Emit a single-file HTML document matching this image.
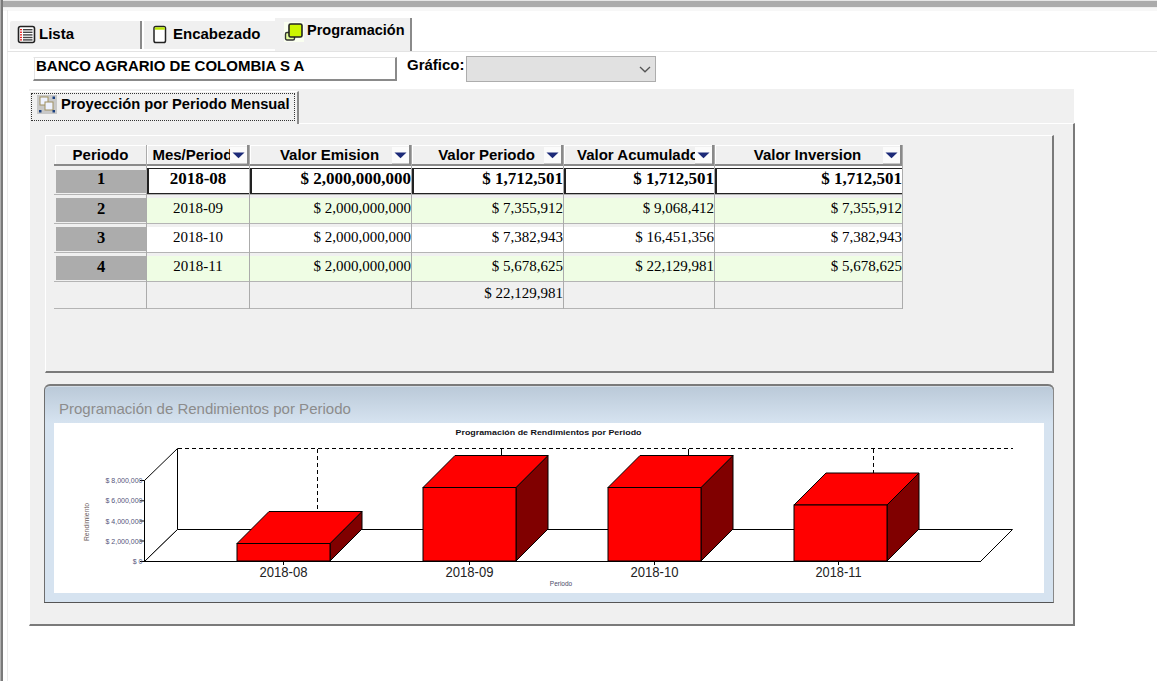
<!DOCTYPE html>
<html><head><meta charset="utf-8">
<style>
*{box-sizing:border-box;margin:0;padding:0}
html,body{width:1157px;height:681px;overflow:hidden;background:#fff;position:relative;font-family:"Liberation Sans",sans-serif;color:#000}
.a{position:absolute}
.b{font-weight:bold}
.tab{position:absolute;background:#f0f0f0;font-weight:bold;font-size:15px;white-space:nowrap}
.lbl{position:absolute;white-space:nowrap;line-height:1}
.hdr{position:absolute;top:146px;height:18px;background:#f0f0f0;border-top:1px solid #fff;border-left:1px solid #fff;font-weight:bold;font-size:14px;line-height:17px;text-align:center;white-space:nowrap;overflow:hidden}
.btn{position:absolute;top:1px;right:0;width:18px;height:16px;background:#f0f0f0;border-left:1px solid #fff}
.btn i{position:absolute;left:3px;top:5px;width:0;height:0;border-left:6px solid transparent;border-right:6px solid transparent;border-top:5px solid #1a2a7a}
.cell{position:absolute;font-family:"Liberation Serif",serif;font-size:15px;line-height:24px;white-space:nowrap;overflow:hidden}
.rh{position:absolute;left:56px;width:90px;background:#acacac;font-family:"Liberation Serif",serif;font-weight:bold;font-size:15px;text-align:center}
.hl{position:absolute;height:17px;line-height:17px;font-weight:bold;font-size:15px;text-align:center;white-space:nowrap;overflow:hidden}
.tc{position:absolute;height:25px;line-height:25px;font-family:"Liberation Serif",serif;white-space:nowrap;overflow:hidden}
</style></head><body>
<!-- outer window chrome -->
<div class="a" style="left:0;top:0;width:1157px;height:1px;background:#e6e6e6"></div>
<div class="a" style="left:0;top:1px;width:1157px;height:6px;background:#ababab"></div>
<div class="a" style="left:0;top:7px;width:1157px;height:1px;background:#eeeeee"></div>
<div class="a" style="left:0;top:8px;width:1157px;height:3px;background:#f7f7f7"></div>
<div class="a" style="left:0;top:0;width:1px;height:681px;background:#b0b0b0"></div>
<div class="a" style="left:1px;top:0;width:2px;height:681px;background:#7a7a7a"></div>
<div class="a" style="left:7px;top:10px;width:1px;height:671px;background:#ececec"></div>

<!-- tabs -->
<div class="a" style="left:7px;top:51px;width:1150px;height:1px;background:#e3e3e3"></div>
<div class="tab" style="left:10px;top:21px;width:132px;height:28px;border-right:2px solid #8a8a8a;border-top-left-radius:2px"></div>
<div class="tab" style="left:144px;top:21px;width:131px;height:28px"></div>
<div class="tab" style="left:275px;top:18px;width:137px;height:33px;border-right:2px solid #8a8a8a"></div>


<!-- tab labels -->
<svg class="a" style="left:17px;top:25px" width="19" height="19" viewBox="0 0 19 19">
 <rect x="1.5" y="1.5" width="16" height="16" rx="2" fill="#fff" stroke="#222" stroke-width="1.6"/>
 <g fill="#e82020"><rect x="3" y="4" width="2" height="1.3"/><rect x="3" y="6.6" width="2" height="1.3"/><rect x="3" y="9.2" width="2" height="1.3"/><rect x="3" y="11.8" width="2" height="1.3"/><rect x="3" y="14.2" width="2" height="1.3"/></g>
 <g fill="#444"><rect x="6" y="4" width="9.5" height="1.4"/><rect x="6" y="6.6" width="9.5" height="1.4"/><rect x="6" y="9.2" width="9.5" height="1.4"/><rect x="6" y="11.8" width="9.5" height="1.4"/><rect x="6" y="14.2" width="9.5" height="1.4"/></g>
</svg>
<div class="lbl b" style="left:39px;top:26px;font-size:15px">Lista</div>
<svg class="a" style="left:152px;top:25px" width="16" height="19" viewBox="0 0 16 19">
 <rect x="2" y="1.5" width="11.5" height="16" rx="1.8" fill="#fff" stroke="#222" stroke-width="1.5"/>
 <rect x="2.8" y="2.3" width="10" height="2.4" fill="#b8e600"/>
</svg>
<div class="lbl b" style="left:173px;top:26px;font-size:15px">Encabezado</div>
<div class="a" style="left:284px;top:22px;width:20px;height:20px;background:#fafff0"></div>
<svg class="a" style="left:284px;top:22px" width="20" height="20" viewBox="0 0 20 20">
 <rect x="1.5" y="10.5" width="9" height="7.5" rx="1.5" fill="#e4ff9c" stroke="#333" stroke-width="1.4"/>
 <rect x="5" y="2" width="13" height="13" rx="1.6" fill="#ccf500" stroke="#222" stroke-width="1.6"/>
</svg>
<div class="lbl b" style="left:307px;top:23px;font-size:14.5px">Programación</div>

<!-- textbox -->
<div class="a" style="left:33px;top:57px;width:364px;height:24px;background:#fff;border-top:1px solid #e3e3e3;border-left:1px solid #fff;box-shadow:inset 1px 0 0 #e3e3e3;border-right:2px solid #8a8a8a;border-bottom:2px solid #8a8a8a"></div>
<div class="lbl b" style="left:36px;top:58px;font-size:15px">BANCO AGRARIO DE COLOMBIA S A</div>
<div class="lbl b" style="left:407px;top:57px;font-size:15px">Gráfico:</div>
<div class="a" style="left:466px;top:56px;width:190px;height:26px;background:#e1e1e1;border:1px solid #adadad"></div>
<svg class="a" style="left:639px;top:66px" width="12" height="7" viewBox="0 0 12 7"><path d="M1 1 L6 5.8 L11 1" fill="none" stroke="#555" stroke-width="1.3"/></svg>

<!-- page frame -->
<div class="a" style="left:29px;top:89px;width:1045px;height:35px;background:#f0f0f0"></div>
<div class="a" style="left:29px;top:123px;width:1046px;height:503px;background:#f0f0f0;border-top:1px solid #fff;border-left:1px solid #fff;border-right:2px solid #7a7a7a;border-bottom:2px solid #7a7a7a"></div>
<div class="a" style="left:29px;top:91px;width:270px;height:33px;background:#f0f0f0;border-left:1px solid #fff;border-top:1px solid #fff;border-right:2px solid #8a8a8a"></div>
<div class="a" style="left:31px;top:93px;width:264px;height:28px;border:1px dotted #333"></div>
<svg class="a" style="left:37px;top:95px" width="20" height="19" viewBox="0 0 20 19">
 <rect x="0" y="0" width="20" height="19" fill="#c8c8c8"/>
 <rect x="3" y="2" width="8" height="8" fill="#eef2ff" stroke="#a09060" stroke-width="1"/>
 <rect x="8" y="7" width="8" height="8" fill="#eef2ff" stroke="#a09060" stroke-width="1"/>
 <rect x="15.5" y="1.5" width="2.5" height="2.5" fill="#1a4080"/>
 <rect x="2" y="15" width="2.5" height="2.5" fill="#1a4080"/>
 <rect x="15.5" y="15" width="2.5" height="2.5" fill="#1a4080"/>
</svg>
<div class="lbl b" style="left:61px;top:97px;font-size:14.7px">Proyección por Periodo Mensual</div>

<!-- inner frame -->
<div class="a" style="left:45px;top:135px;width:1009px;height:238px;border-top:1px solid #fff;border-left:1px solid #fff;border-right:2px solid #7a7a7a;border-bottom:2px solid #7a7a7a"></div>

<!-- grid -->
<div class="a" style="left:55px;top:145px;width:848px;height:19px;background:#f0f0f0"></div>
<div class="a" style="left:54px;top:164px;width:849px;height:2px;background:#8a8a8a"></div>
<div class="a" style="left:55px;top:145px;width:91px;height:1px;background:#fff"></div>
<div class="a" style="left:55px;top:145px;width:1px;height:19px;background:#fff"></div>
<div class="hl" style="left:55px;top:146px;width:91px">Periodo</div>
<div class="a" style="left:147px;top:145px;width:100px;height:1px;background:#fff"></div>
<div class="a" style="left:147px;top:145px;width:1px;height:19px;background:#fff"></div>
<div class="a" style="left:247px;top:145px;width:2px;height:19px;background:#8a8a8a"></div>
<div class="hl" style="left:147px;top:146px;width:100px">Mes/Periodo</div>
<div class="a" style="left:230px;top:147px;width:17px;height:17px;background:#fbfbfb;border-bottom:1px solid #c8c8c8"></div>
<svg class="a" style="left:232px;top:152px" width="13" height="7" viewBox="0 0 13 7"><path d="M0.5 0.5 H12.5 L6.5 6.2 Z" fill="#1c2a78"/></svg>
<div class="a" style="left:250px;top:145px;width:159px;height:1px;background:#fff"></div>
<div class="a" style="left:250px;top:145px;width:1px;height:19px;background:#fff"></div>
<div class="a" style="left:409px;top:145px;width:2px;height:19px;background:#8a8a8a"></div>
<div class="hl" style="left:250px;top:146px;width:159px">Valor Emision</div>
<div class="a" style="left:392px;top:147px;width:17px;height:17px;background:#fbfbfb;border-bottom:1px solid #c8c8c8"></div>
<svg class="a" style="left:394px;top:152px" width="13" height="7" viewBox="0 0 13 7"><path d="M0.5 0.5 H12.5 L6.5 6.2 Z" fill="#1c2a78"/></svg>
<div class="a" style="left:412px;top:145px;width:149px;height:1px;background:#fff"></div>
<div class="a" style="left:412px;top:145px;width:1px;height:19px;background:#fff"></div>
<div class="a" style="left:561px;top:145px;width:2px;height:19px;background:#8a8a8a"></div>
<div class="hl" style="left:412px;top:146px;width:149px">Valor Periodo</div>
<div class="a" style="left:544px;top:147px;width:17px;height:17px;background:#fbfbfb;border-bottom:1px solid #c8c8c8"></div>
<svg class="a" style="left:546px;top:152px" width="13" height="7" viewBox="0 0 13 7"><path d="M0.5 0.5 H12.5 L6.5 6.2 Z" fill="#1c2a78"/></svg>
<div class="a" style="left:564px;top:145px;width:148px;height:1px;background:#fff"></div>
<div class="a" style="left:564px;top:145px;width:1px;height:19px;background:#fff"></div>
<div class="a" style="left:712px;top:145px;width:2px;height:19px;background:#8a8a8a"></div>
<div class="hl" style="left:564px;top:146px;width:148px">Valor Acumulado</div>
<div class="a" style="left:695px;top:147px;width:17px;height:17px;background:#fbfbfb;border-bottom:1px solid #c8c8c8"></div>
<svg class="a" style="left:697px;top:152px" width="13" height="7" viewBox="0 0 13 7"><path d="M0.5 0.5 H12.5 L6.5 6.2 Z" fill="#1c2a78"/></svg>
<div class="a" style="left:715px;top:145px;width:185px;height:1px;background:#fff"></div>
<div class="a" style="left:715px;top:145px;width:1px;height:19px;background:#fff"></div>
<div class="a" style="left:900px;top:145px;width:2px;height:19px;background:#8a8a8a"></div>
<div class="hl" style="left:715px;top:146px;width:185px">Valor Inversion</div>
<div class="a" style="left:883px;top:147px;width:17px;height:17px;background:#fbfbfb;border-bottom:1px solid #c8c8c8"></div>
<svg class="a" style="left:885px;top:152px" width="13" height="7" viewBox="0 0 13 7"><path d="M0.5 0.5 H12.5 L6.5 6.2 Z" fill="#1c2a78"/></svg>
<div class="a" style="left:146px;top:145px;width:1px;height:164px;background:#ababab"></div>
<div class="a" style="left:249px;top:145px;width:1px;height:164px;background:#ababab"></div>
<div class="a" style="left:411px;top:145px;width:1px;height:164px;background:#ababab"></div>
<div class="a" style="left:563px;top:145px;width:1px;height:164px;background:#ababab"></div>
<div class="a" style="left:714px;top:145px;width:1px;height:164px;background:#ababab"></div>
<div class="a" style="left:902px;top:145px;width:1px;height:164px;background:#ababab"></div>
<div class="a" style="left:147px;top:166px;width:755px;height:28px;background:#fff"></div>
<div class="a" style="left:55px;top:166px;width:91px;height:28px;background:#f0f0f0"></div>
<div class="a" style="left:56px;top:170px;width:90px;height:23px;background:#acacac"></div>
<div class="a" style="left:147px;top:168px;width:755px;height:1px;background:#222"></div>
<div class="a" style="left:147px;top:193px;width:755px;height:1px;background:#222"></div>
<div class="a" style="left:147px;top:168px;width:2px;height:26px;background:#222"></div>
<div class="a" style="left:250px;top:168px;width:2px;height:26px;background:#222"></div>
<div class="a" style="left:412px;top:168px;width:2px;height:26px;background:#222"></div>
<div class="a" style="left:564px;top:168px;width:2px;height:26px;background:#222"></div>
<div class="a" style="left:715px;top:168px;width:2px;height:26px;background:#222"></div>
<div class="a" style="left:54px;top:194px;width:849px;height:1px;background:#b4b4b4"></div>
<div class="a" style="left:55px;top:195px;width:848px;height:3px;background:#f0f0f0"></div>
<div class="a" style="left:56px;top:198px;width:90px;height:24px;background:#acacac"></div>
<div class="a" style="left:147px;top:198px;width:755px;height:25px;background:#effde4"></div>
<div class="a" style="left:54px;top:223px;width:849px;height:1px;background:#b4b4b4"></div>
<div class="a" style="left:55px;top:224px;width:848px;height:3px;background:#f0f0f0"></div>
<div class="a" style="left:56px;top:227px;width:90px;height:24px;background:#acacac"></div>
<div class="a" style="left:147px;top:227px;width:755px;height:25px;background:#ffffff"></div>
<div class="a" style="left:54px;top:252px;width:849px;height:1px;background:#b4b4b4"></div>
<div class="a" style="left:55px;top:253px;width:848px;height:3px;background:#f0f0f0"></div>
<div class="a" style="left:56px;top:256px;width:90px;height:24px;background:#acacac"></div>
<div class="a" style="left:147px;top:256px;width:755px;height:25px;background:#effde4"></div>
<div class="a" style="left:54px;top:281px;width:849px;height:1px;background:#b4b4b4"></div>
<div class="a" style="left:55px;top:282px;width:848px;height:26px;background:#f0f0f0"></div>
<div class="a" style="left:54px;top:308px;width:849px;height:1px;background:#b4b4b4"></div>
<div class="a" style="left:146px;top:166px;width:1px;height:143px;background:#ababab"></div>
<div class="a" style="left:249px;top:166px;width:1px;height:143px;background:#ababab"></div>
<div class="a" style="left:411px;top:166px;width:1px;height:143px;background:#ababab"></div>
<div class="a" style="left:563px;top:166px;width:1px;height:143px;background:#ababab"></div>
<div class="a" style="left:714px;top:166px;width:1px;height:143px;background:#ababab"></div>
<div class="a" style="left:902px;top:166px;width:1px;height:143px;background:#ababab"></div>
<div class="a" style="left:147px;top:168px;width:2px;height:26px;background:#222"></div>
<div class="a" style="left:250px;top:168px;width:2px;height:26px;background:#222"></div>
<div class="a" style="left:412px;top:168px;width:2px;height:26px;background:#222"></div>
<div class="a" style="left:564px;top:168px;width:2px;height:26px;background:#222"></div>
<div class="a" style="left:715px;top:168px;width:2px;height:26px;background:#222"></div>
<div class="tc" style="left:56px;top:166px;width:90px;text-align:center;font-weight:bold;font-size:16.5px">1</div>
<div class="tc" style="left:147px;top:166px;width:102px;text-align:center;font-weight:bold;font-size:17px">2018-08</div>
<div class="tc" style="left:250px;top:166px;width:161px;text-align:right;font-weight:bold;font-size:17px">$ 2,000,000,000</div>
<div class="tc" style="left:412px;top:166px;width:151px;text-align:right;font-weight:bold;font-size:17px">$ 1,712,501</div>
<div class="tc" style="left:564px;top:166px;width:150px;text-align:right;font-weight:bold;font-size:17px">$ 1,712,501</div>
<div class="tc" style="left:715px;top:166px;width:187px;text-align:right;font-weight:bold;font-size:17px">$ 1,712,501</div>
<div class="tc" style="left:56px;top:196px;width:90px;text-align:center;font-weight:bold;font-size:16.5px">2</div>
<div class="tc" style="left:147px;top:196px;width:102px;text-align:center;font-size:15px">2018-09</div>
<div class="tc" style="left:250px;top:196px;width:161px;text-align:right;font-size:15px">$ 2,000,000,000</div>
<div class="tc" style="left:412px;top:196px;width:151px;text-align:right;font-size:15px">$ 7,355,912</div>
<div class="tc" style="left:564px;top:196px;width:150px;text-align:right;font-size:15px">$ 9,068,412</div>
<div class="tc" style="left:715px;top:196px;width:187px;text-align:right;font-size:15px">$ 7,355,912</div>
<div class="tc" style="left:56px;top:225px;width:90px;text-align:center;font-weight:bold;font-size:16.5px">3</div>
<div class="tc" style="left:147px;top:225px;width:102px;text-align:center;font-size:15px">2018-10</div>
<div class="tc" style="left:250px;top:225px;width:161px;text-align:right;font-size:15px">$ 2,000,000,000</div>
<div class="tc" style="left:412px;top:225px;width:151px;text-align:right;font-size:15px">$ 7,382,943</div>
<div class="tc" style="left:564px;top:225px;width:150px;text-align:right;font-size:15px">$ 16,451,356</div>
<div class="tc" style="left:715px;top:225px;width:187px;text-align:right;font-size:15px">$ 7,382,943</div>
<div class="tc" style="left:56px;top:254px;width:90px;text-align:center;font-weight:bold;font-size:16.5px">4</div>
<div class="tc" style="left:147px;top:254px;width:102px;text-align:center;font-size:15px">2018-11</div>
<div class="tc" style="left:250px;top:254px;width:161px;text-align:right;font-size:15px">$ 2,000,000,000</div>
<div class="tc" style="left:412px;top:254px;width:151px;text-align:right;font-size:15px">$ 5,678,625</div>
<div class="tc" style="left:564px;top:254px;width:150px;text-align:right;font-size:15px">$ 22,129,981</div>
<div class="tc" style="left:715px;top:254px;width:187px;text-align:right;font-size:15px">$ 5,678,625</div>
<div class="tc" style="left:412px;top:281px;width:151px;text-align:right;font-size:15px">$ 22,129,981</div>
<!-- chart -->
<div class="a" style="left:44px;top:384px;width:1010px;height:219px;border:1px solid #6e6e6e;border-top:2px solid #7a7a7a;border-top-left-radius:6px;border-top-right-radius:6px;box-shadow:inset 0 1px 0 #d4dde6;background:linear-gradient(to bottom,#bac9d8 0px,#d6e3f0 37px,#d6e3f0 100%)"></div>
<div class="a" style="left:44px;top:384px;width:1010px;height:219px;border-right:1px solid #888;border-bottom:1px solid #555;border-top-left-radius:6px;border-top-right-radius:6px;pointer-events:none"></div>
<div class="lbl" style="left:59px;top:401px;font-size:15px;color:#8c8c8c">Programación de Rendimientos por Periodo</div>
<div class="a" style="left:54px;top:423px;width:990px;height:170px;background:#fff"></div>
<svg class="a" style="left:54px;top:423px" width="990" height="170" viewBox="54 423 990 170">
<g shape-rendering="crispEdges" stroke="#000" stroke-width="1" fill="none">
<polygon points="144.5,480.5 177.5,448.5 177.5,529.5 144.5,561.5" fill="#fff" shape-rendering="auto"/>
<polygon points="144.5,561.5 177.5,529.5 1012.5,529.5 980.5,561.5" fill="#fff" shape-rendering="auto"/>
<line x1="177.5" y1="448.5" x2="1013" y2="448.5" stroke-dasharray="4,3"/>
<line x1="317.5" y1="449" x2="317.5" y2="511" stroke-dasharray="4,3"/>
<line x1="873.5" y1="449" x2="873.5" y2="473" stroke-dasharray="4,3"/>
<line x1="501.5" y1="449" x2="501.5" y2="455"/>
<line x1="688.5" y1="449" x2="688.5" y2="455"/>
</g>
<polygon points="330,543.5 362,511.5 362,529 330,561" fill="#800000" stroke="#000" stroke-width="1" stroke-linejoin="round"/>
<polygon points="237,543.5 269,511.5 362,511.5 330,543.5" fill="#ff0000" stroke="#000" stroke-width="1" stroke-linejoin="round"/>
<rect x="237" y="543.5" width="93" height="17.5" fill="#ff0000" stroke="#000" stroke-width="1"/>
<polygon points="516,487.5 548,455.5 548,529 516,561" fill="#800000" stroke="#000" stroke-width="1" stroke-linejoin="round"/>
<polygon points="423,487.5 455,455.5 548,455.5 516,487.5" fill="#ff0000" stroke="#000" stroke-width="1" stroke-linejoin="round"/>
<rect x="423" y="487.5" width="93" height="73.5" fill="#ff0000" stroke="#000" stroke-width="1"/>
<polygon points="701,487.5 733,455.5 733,529 701,561" fill="#800000" stroke="#000" stroke-width="1" stroke-linejoin="round"/>
<polygon points="608,487.5 640,455.5 733,455.5 701,487.5" fill="#ff0000" stroke="#000" stroke-width="1" stroke-linejoin="round"/>
<rect x="608" y="487.5" width="93" height="73.5" fill="#ff0000" stroke="#000" stroke-width="1"/>
<polygon points="887,505 919,473 919,529 887,561" fill="#800000" stroke="#000" stroke-width="1" stroke-linejoin="round"/>
<polygon points="794,505 826,473 919,473 887,505" fill="#ff0000" stroke="#000" stroke-width="1" stroke-linejoin="round"/>
<rect x="794" y="505" width="93" height="56" fill="#ff0000" stroke="#000" stroke-width="1"/>
<line x1="144" y1="561.5" x2="981" y2="561.5" stroke="#000" stroke-width="1.2"/>
<line x1="140" y1="480.5" x2="144.5" y2="480.5" stroke="#000" stroke-width="1"/>
<text x="142.5" y="483.0" text-anchor="end" font-family="Liberation Sans" font-size="7" fill="#55557a">$ 8,000,000</text>
<line x1="140" y1="500.8" x2="144.5" y2="500.8" stroke="#000" stroke-width="1"/>
<text x="142.5" y="503.3" text-anchor="end" font-family="Liberation Sans" font-size="7" fill="#55557a">$ 6,000,000</text>
<line x1="140" y1="521" x2="144.5" y2="521" stroke="#000" stroke-width="1"/>
<text x="142.5" y="523.5" text-anchor="end" font-family="Liberation Sans" font-size="7" fill="#55557a">$ 4,000,000</text>
<line x1="140" y1="541" x2="144.5" y2="541" stroke="#000" stroke-width="1"/>
<text x="142.5" y="543.5" text-anchor="end" font-family="Liberation Sans" font-size="7" fill="#55557a">$ 2,000,000</text>
<line x1="140" y1="561.5" x2="144.5" y2="561.5" stroke="#000" stroke-width="1"/>
<text x="142.5" y="564.0" text-anchor="end" font-family="Liberation Sans" font-size="7" fill="#55557a">$ 0</text>
<text transform="translate(89,522) rotate(-90)" text-anchor="middle" font-family="Liberation Sans" font-size="6.8" fill="#6a5a5a">Rendimiento</text>
<text x="548.5" y="434.8" text-anchor="middle" font-family="Liberation Sans" font-weight="bold" font-size="8" fill="#111118" textLength="186" lengthAdjust="spacingAndGlyphs">Programación de Rendimientos por Periodo</text>
<line x1="283.5" y1="561" x2="283.5" y2="565" stroke="#000" stroke-width="1"/>
<text x="283.5" y="577" text-anchor="middle" font-family="Liberation Sans" font-size="15" fill="#222" textLength="48" lengthAdjust="spacingAndGlyphs">2018-08</text>
<line x1="469.5" y1="561" x2="469.5" y2="565" stroke="#000" stroke-width="1"/>
<text x="469.5" y="577" text-anchor="middle" font-family="Liberation Sans" font-size="15" fill="#222" textLength="48" lengthAdjust="spacingAndGlyphs">2018-09</text>
<line x1="654.5" y1="561" x2="654.5" y2="565" stroke="#000" stroke-width="1"/>
<text x="654.5" y="577" text-anchor="middle" font-family="Liberation Sans" font-size="15" fill="#222" textLength="48" lengthAdjust="spacingAndGlyphs">2018-10</text>
<line x1="838.5" y1="561" x2="838.5" y2="565" stroke="#000" stroke-width="1"/>
<text x="838.5" y="577" text-anchor="middle" font-family="Liberation Sans" font-size="15" fill="#222" textLength="46" lengthAdjust="spacingAndGlyphs">2018-11</text>
<text x="561" y="586" text-anchor="middle" font-family="Liberation Sans" font-size="6.5" fill="#4a4a6a">Periodo</text>
</svg>
<!-- /chart -->

</body></html>
